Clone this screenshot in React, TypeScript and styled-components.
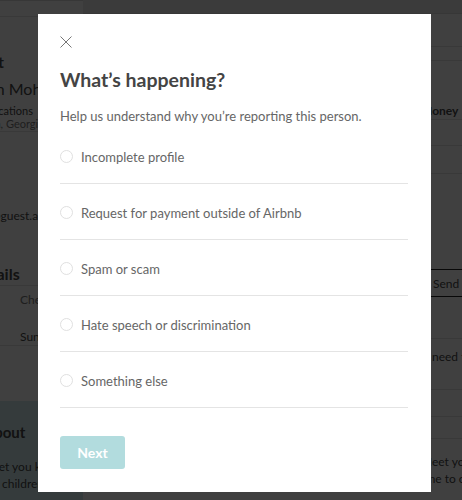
import styled, { createGlobalStyle } from "styled-components";

const GlobalStyle = createGlobalStyle`
  html, body {
    margin: 0;
    padding: 0;
    width: 462px;
    height: 500px;
    overflow: hidden;
    background: #fff;
    font-family: Lato, "Liberation Sans", sans-serif;
    color: #484848;
  }
`;

/* ---- dimmed page underneath ---- */

const Page = styled.div`
  display: flex;
  width: 462px;
  height: 500px;
  overflow: hidden;
`;

const TopBar = styled.div`
  height: 13px;
  background: #ececec;
  border-bottom: 1px solid #dcdcdc;
`;

const LeftPane = styled.div`
  flex: none;
  width: 143px;
  margin-left: -60px;
  display: flex;
  flex-direction: column;
`;

const MiddlePane = styled.div`
  flex: 1;
`;

const RightPane = styled.div`
  flex: none;
  width: 120px;
  margin-right: -76px;
  display: flex;
  flex-direction: column;
`;

const PaneBody = styled.div`
  flex: 1;
  display: flex;
  flex-direction: column;
`;

const Block = styled.div<{ $h: number; $line?: boolean }>`
  height: ${(p) => p.$h}px;
  border-bottom: ${(p) => (p.$line ? "1px solid #e4e4e4" : "none")};
  display: flex;
  flex-direction: column;
  justify-content: flex-end;
  box-sizing: border-box;
`;

const PageText = styled.div<{ $size: number; $bold?: boolean; $muted?: boolean; $indent?: number }>`
  padding-left: ${(p) => p.$indent ?? 0}px;
  font-size: ${(p) => p.$size}px;
  font-weight: ${(p) => (p.$bold ? 700 : 400)};
  color: ${(p) => (p.$muted ? "#7a7a7a" : "#484848")};
  line-height: 1.3;
  white-space: nowrap;
`;

const AboutBox = styled.div`
  flex: 1;
  background: #d2ebee;
  padding: 22px 0 0 0;
  display: flex;
  flex-direction: column;
  gap: 2px;
`;

const SendButton = styled.div`
  height: 26px;
  border-top: 1px solid #202020;
  border-bottom: 1px solid #202020;
  display: flex;
  align-items: center;
  padding-left: 15px;
  font-size: 12px;
  color: #484848;
  white-space: nowrap;
`;

/* ---- modal ---- */

const Overlay = styled.div`
  position: fixed;
  inset: 0;
  background: rgba(0, 0, 0, 0.75);
  display: flex;
  align-items: flex-start;
  padding: 14px 0 0 38px;
`;

const Modal = styled.div`
  width: 393px;
  height: 478px;
  box-sizing: border-box;
  background: #fff;
  padding: 22px 23px 23px 22px;
  display: flex;
  flex-direction: column;
`;

const CloseButton = styled.button`
  width: 12px;
  height: 12px;
  padding: 0;
  border: 0;
  background: none;
  display: flex;
  cursor: pointer;
`;

const Title = styled.h1`
  margin: 19px 0 0;
  font-size: 19.5px;
  line-height: 26px;
  font-weight: 700;
  color: #444;
`;

const Subtitle = styled.p`
  margin: 14px 0 0;
  font-size: 13px;
  line-height: 18px;
  font-weight: 400;
  color: #666;
`;

const Options = styled.div`
  margin-top: 3px;
  display: flex;
  flex-direction: column;
`;

const Option = styled.label`
  height: 56px;
  padding-top: 3px;
  box-sizing: border-box;
  border-bottom: 1px solid #e4e4e4;
  display: flex;
  align-items: center;
  gap: 8px;
  font-size: 13px;
  font-weight: 400;
  color: #666;
  cursor: pointer;
`;

const Radio = styled.span`
  width: 11px;
  height: 11px;
  margin-top: -2px;
  border: 1px solid #e0e0e0;
  border-radius: 50%;
  flex: none;
`;

const NextButton = styled.button`
  margin-top: 28px;
  align-self: flex-start;
  width: 65px;
  height: 34px;
  border: 0;
  border-radius: 3px;
  background: #b2dcde;
  color: #fff;
  font-family: Lato, "Liberation Sans", sans-serif;
  font-size: 14px;
  font-weight: 700;
`;

const reasons = [
  "Incomplete profile",
  "Request for payment outside of Airbnb",
  "Spam or scam",
  "Hate speech or discrimination",
  "Something else",
];

export default function App() {
  return (
    <>
      <GlobalStyle />
      <Page>
        <LeftPane>
          <TopBar />
          <PaneBody>
            <Block $h={16} $line />
            <Block $h={56}>
              <PageText $size={16} $bold $indent={22}>Guest</PageText>
            </Block>
            <Block $h={27}>
              <PageText $size={16} $indent={14}>Hassan Mohan</PageText>
            </Block>
            <Block $h={18}>
              <PageText $size={11} $indent={33}>Verifications</PageText>
            </Block>
            <Block $h={14} $line>
              <PageText $size={11} $muted $indent={26}>Atlanta, Georgia</PageText>
            </Block>
            <Block $h={92}>
              <PageText $size={12} $indent={14}>saiham@guest.airbnb.com</PageText>
            </Block>
            <Block $h={62} $line>
              <PageText $size={16} $bold $indent={2}>Trip details</PageText>
            </Block>
            <Block $h={22}>
              <PageText $size={12} $muted $indent={80}>Check-in</PageText>
            </Block>
            <Block $h={38} $line>
              <PageText $size={12} $indent={80}>Sun, Jun 3</PageText>
            </Block>
            <Block $h={55} />
            <AboutBox>
              <PageText $size={15} $bold $indent={4}>Know about</PageText>
              <PageText $size={12} $indent={53} style={{ marginTop: 14 }}>Let you know</PageText>
              <PageText $size={12} $indent={6}>If bringing children</PageText>
              <PageText $size={12} $indent={10}>and more</PageText>
            </AboutBox>
          </PaneBody>
        </LeftPane>
        <MiddlePane>
          <TopBar />
        </MiddlePane>
        <RightPane>
          <TopBar />
          <PaneBody>
            <Block $h={33} $line />
            <Block $h={14} $line />
            <Block $h={59} $line>
              <PageText $size={12} $bold $indent={3}>Money</PageText>
            </Block>
            <Block $h={26} $line />
            <Block $h={28} $line />
            <Block $h={95} />
            <SendButton>Send Message</SendButton>
            <Block $h={42} $line />
            <Block $h={26}>
              <PageText $size={12} $indent={14}>need to know</PageText>
            </Block>
            <Block $h={25} $line />
            <Block $h={27} $line />
            <Block $h={22} $line />
            <Block $h={31}>
              <PageText $size={12} $indent={3}>Meet your</PageText>
            </Block>
            <Block $h={17}>
              <PageText $size={12}>time to check</PageText>
            </Block>
          </PaneBody>
        </RightPane>
      </Page>

      <Overlay>
        <Modal role="dialog" aria-modal="true">
          <CloseButton aria-label="Close">
            <svg width="12" height="12" viewBox="0 0 12 12">
              <path d="M0.5 0.5 L11.5 11.5 M11.5 0.5 L0.5 11.5" stroke="#767676" strokeWidth="1" fill="none" />
            </svg>
          </CloseButton>
          <Title>What’s happening?</Title>
          <Subtitle>Help us understand why you’re reporting this person.</Subtitle>
          <Options>
            {reasons.map((reason) => (
              <Option key={reason}>
                <Radio />
                {reason}
              </Option>
            ))}
          </Options>
          <NextButton disabled>Next</NextButton>
        </Modal>
      </Overlay>
    </>
  );
}
